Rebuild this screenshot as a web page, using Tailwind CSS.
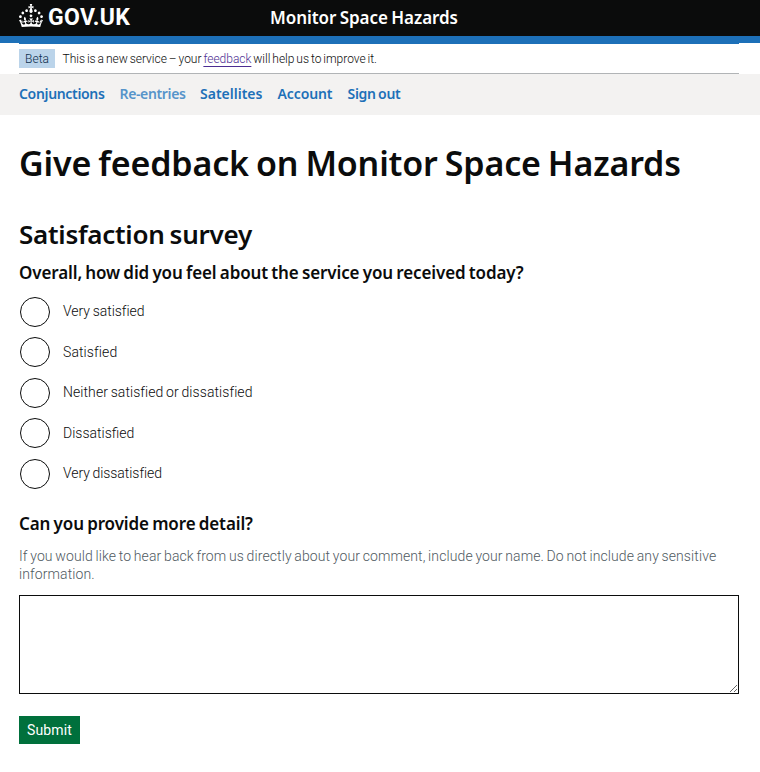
<!DOCTYPE html>
<html lang="en">
<head>
<meta charset="utf-8">
<title>Give feedback on Monitor Space Hazards</title>
<script src="https://cdn.jsdelivr.net/npm/@tailwindcss/browser@4"></script>
</head>
<body class="bg-white text-[#0b0c0c] font-[Roboto,Arial,sans-serif] text-sm">
<header class="h-[43px] bg-[#0b0c0c] border-b-[7px] border-[#1d70b8] px-[19px] flex items-start text-white">
  <a class="flex w-[251px] h-9 pt-1">
    <svg class="w-6 h-[23px] shrink-0" viewBox="0 0 32 30" preserveAspectRatio="none" fill="currentColor"><path d="M22.6 10.4c-1 .4-2-.1-2.4-1-.4-.9.1-2 1-2.4.9-.4 2 .1 2.4 1s-.1 2-1 2.4m-5.9 6.7c-.9.4-2-.1-2.4-1-.4-.9.1-2 1-2.4.9-.4 2 .1 2.4 1s-.1 2-1 2.4m10.8-3.7c-1 .4-2-.1-2.4-1-.4-.9.1-2 1-2.4.9-.4 2 .1 2.4 1s0 2-1 2.4m3.3 4.8c-1 .4-2-.1-2.4-1-.4-.9.1-2 1-2.4.9-.4 2 .1 2.4 1s-.1 2-1 2.4M17 4.7l2.3 1.2V2.5l-2.3.7-.2-.2.9-3h-3.4l.9 3-.2.2c-.1.1-2.3-.7-2.3-.7v3.4L15 4.7c.1.1.1.2.2.2l-1.3 4c-.1.2-.1.4-.1.6 0 1.1.8 2 1.9 2.2h.7c1-.2 1.9-1.1 1.9-2.1 0-.2 0-.4-.1-.6l-1.3-4c-.1-.2 0-.2.1-.3m-7.6 5.7c.9.4 2-.1 2.4-1 .4-.9-.1-2-1-2.4-.9-.4-2 .1-2.4 1s0 2 1 2.4m-5 3c.9.4 2-.1 2.4-1 .4-.9-.1-2-1-2.4-.9-.4-2 .1-2.4 1s.1 2 1 2.4m-3.2 4.8c.9.4 2-.1 2.4-1 .4-.9-.1-2-1-2.4-.9-.4-2 .1-2.4 1s0 2 1 2.4m14.8 11c4.4 0 8.6.3 12.3.8 1.1-4.5 2.4-7 3.7-8.8l-2.5-.9c.2 1.3.3 1.9 0 2.7-.4-.4-.8-1.1-1.1-2.3l-1.2 4c.7-.5 1.3-.8 2-.9-1.1 2.5-2.6 3.1-3.5 3-1.1-.2-1.7-1.2-1.5-2.1.3-1.2 1.5-1.5 2.1-.1 1.1-2.3-.8-3-2-2.3 1.9-1.9 2.1-3.5.6-5.6-2.1 1.6-2.1 3.2-1.2 5.5-1.2-1.4-3.2-.6-2.5 1.6.9-1.4 2.1-.5 1.9.8-.2 1.1-1.7 2.1-3.5 1.9-2.7-.2-2.9-2.1-2.9-3.6.7-.1 1.9.5 2.9 1.9l.4-4.3c-1.1 1.1-2.1 1.4-3.2 1.4.4-1.2 2.1-3 2.1-3h-5.4s1.7 1.9 2.1 3c-1.1 0-2.1-.2-3.2-1.4l.4 4.3c1-1.4 2.2-2 2.9-1.9-.1 1.5-.2 3.4-2.9 3.6-1.9.2-3.4-.8-3.5-1.9-.2-1.3 1-2.2 1.9-.8.7-2.3-1.2-3-2.5-1.6.9-2.2.9-3.9-1.2-5.5-1.5 2-1.3 3.7.6 5.6-1.2-.7-3.1 0-2 2.3.6-1.4 1.8-1.1 2.1.1.2.9-.3 1.9-1.5 2.1-.9.2-2.4-.5-3.5-3 .6 0 1.2.3 2 .9l-1.2-4c-.3 1.1-.7 1.9-1.1 2.3-.3-.8-.2-1.4 0-2.7l-2.9.9C1.3 23 2.6 25.5 3.7 30c3.7-.5 7.9-.8 12.3-.8"/></svg>
    <span class="ml-[5px] text-[23px] leading-[27px] font-bold tracking-[0.3px]">GOV.UK</span>
  </a>
  <a class="font-['Noto_Sans',sans-serif] text-[17px] leading-[35px] font-semibold tracking-[-0.05px] [word-spacing:-1px] whitespace-nowrap">Monitor Space Hazards</a>
</header>
<div class="px-[19px] h-[31px]">
  <div class="w-[720px] h-[31px] border-t border-t-[#1d70b8] border-b border-b-[#b1b4b6] flex items-center text-xs">
    <strong class="bg-[#bbd4ea] text-[#0c2d4a] font-[350] w-9 h-[19px] leading-[20px] text-center -mt-px">Beta</strong>
    <span class="ml-[7.5px] mt-px font-[350] tracking-[-0.01px] [word-spacing:-1px] whitespace-nowrap">This is a new service – your <a class="text-[#4c2c92] underline underline-offset-[3px] decoration-1">feedback</a> will help us to improve it.</span>
  </div>
</div>
<nav class="bg-[#f3f2f1] h-[41px] px-[19px] flex items-center pb-px font-['Noto_Sans',sans-serif] font-semibold text-[#1d70b8] whitespace-nowrap">
  <a class="w-[100.5px] tracking-[-0.33px]">Conjunctions</a>
  <a class="w-[80.5px] tracking-[-0.36px] text-[#5694ca]">Re-entries</a>
  <a class="w-[77.5px]">Satellites</a>
  <a class="w-[70px] tracking-[-0.1px]">Account</a>
  <a class="tracking-[-0.29px] [word-spacing:-1px]">Sign out</a>
</nav>
<main class="px-[19px] pt-[29px] [&_h1]:font-['Noto_Sans',sans-serif] [&_h2]:font-['Noto_Sans',sans-serif] [&_h3]:font-['Noto_Sans',sans-serif]">
  <h1 class="text-[34px] leading-[38px] font-semibold tracking-[-0.16px] [word-spacing:-1.6px] whitespace-nowrap">Give feedback on Monitor Space Hazards</h1>
  <h2 class="mt-[37px] mb-[13px] text-[26px] leading-[30px] font-semibold [word-spacing:-1.5px] tracking-[-0.26px]">Satisfaction survey</h2>
  <h3 class="text-[17px] leading-[22px] font-semibold tracking-[-0.12px] [word-spacing:-1px] whitespace-nowrap">Overall, how did you feel about the service you received today?</h3>
  <div class="mt-[13px] pl-px grid gap-[10.4px] leading-[18px] font-[350]">
    <label class="flex h-[30px] items-center gap-[13px] tracking-[-0.04px] [word-spacing:-0.6px]"><span class="size-[30px] rounded-full border-[1.3px] border-[#0b0c0c]"></span><span class="-mt-0.5">Very satisfied</span></label>
    <label class="flex h-[30px] items-center gap-[13px] tracking-[0.1px]"><span class="size-[30px] rounded-full border-[1.3px] border-[#0b0c0c]"></span><span>Satisfied</span></label>
    <label class="flex h-[30px] items-center gap-[13px] tracking-[0.07px] [word-spacing:-0.8px]"><span class="size-[30px] rounded-full border-[1.3px] border-[#0b0c0c]"></span><span class="-mt-px">Neither satisfied or dissatisfied</span></label>
    <label class="flex h-[30px] items-center gap-[13px]"><span class="size-[30px] rounded-full border-[1.3px] border-[#0b0c0c]"></span><span>Dissatisfied</span></label>
    <label class="flex h-[30px] items-center gap-[13px] tracking-[-0.05px] [word-spacing:-0.8px]"><span class="size-[30px] rounded-full border-[1.3px] border-[#0b0c0c]"></span><span class="-mt-px">Very dissatisfied</span></label>
  </div>
  <h3 class="mt-[24.4px] text-[17px] leading-[22px] font-semibold tracking-[-0.12px] [word-spacing:-1px]">Can you provide more detail?</h3>
  <p class="mt-3 leading-[18px] font-[350] tracking-[0.098px] [word-spacing:-0.85px] text-[#505a5f]">If you would like to hear back from us directly about your comment, include your name. Do not include any sensitive information.</p>
  <textarea class="mt-3 block w-[720px] h-[99px] border border-[#0b0c0c] bg-white resize-y"></textarea>
  <button class="mt-[22px] block w-[61px] h-[28px] bg-[#00703c] text-white leading-[28px] tracking-[0.1px] shadow-[0_1px_0_#002d18,0_2px_0_#7f968b]">Submit</button>
</main>
</body>
</html>
